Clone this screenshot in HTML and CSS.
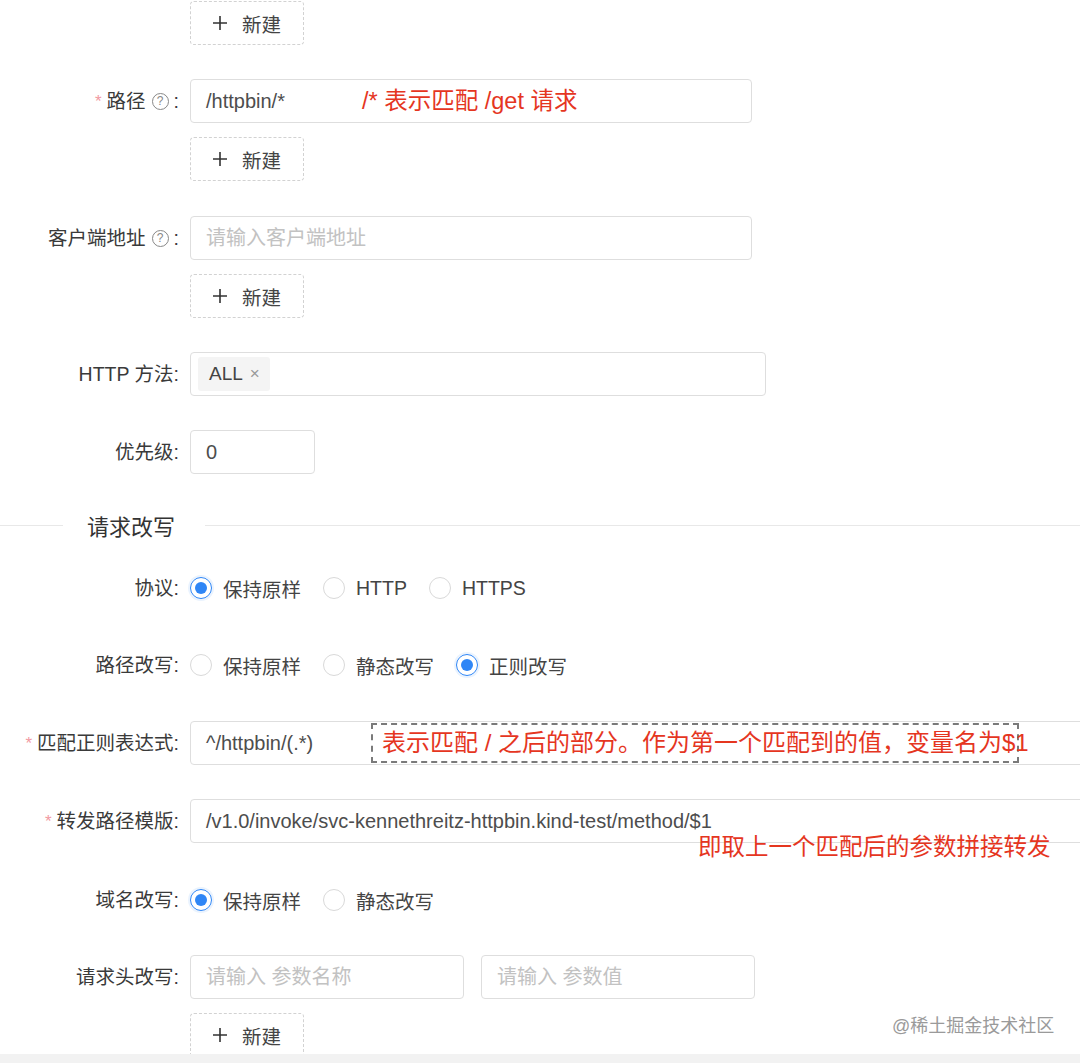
FILE: index.html
```html
<!DOCTYPE html>
<html lang="zh-CN">
<head>
  <meta charset="UTF-8">
  <title>路由规则</title>
  <link rel="stylesheet" href="styles.css">
</head>
<body>
  <div class="page">
    <div class="form">

      <div class="item">
        <div class="item-label"></div>
        <div class="control">
          <button class="btn-dashed"><svg class="plus" viewBox="0 0 14 14"><path d="M7 0v14M0 7h14"/></svg>新建</button>
        </div>
      </div>

      <div class="item item-gap">
        <label class="item-label required">路径<span class="help">?</span>:</label>
        <div class="control">
          <div class="input w-path">/httpbin/*<span class="note note-path">/* 表示匹配 /get 请求</span></div>
          <button class="btn-dashed"><svg class="plus" viewBox="0 0 14 14"><path d="M7 0v14M0 7h14"/></svg>新建</button>
        </div>
      </div>

      <div class="item">
        <label class="item-label">客户端地址<span class="help">?</span>:</label>
        <div class="control">
          <div class="input w-path placeholder">请输入客户端地址</div>
          <button class="btn-dashed"><svg class="plus" viewBox="0 0 14 14"><path d="M7 0v14M0 7h14"/></svg>新建</button>
        </div>
      </div>

      <div class="item">
        <label class="item-label">HTTP 方法:</label>
        <div class="control">
          <div class="input input-tags w-method"><span class="tag">ALL<span class="tag-close">×</span></span></div>
        </div>
      </div>

      <div class="item">
        <label class="item-label">优先级:</label>
        <div class="control">
          <div class="input w-priority">0</div>
        </div>
      </div>

      <div class="divider"><span class="divider-text">请求改写</span></div>

      <div class="item item-tight">
        <label class="item-label">协议:</label>
        <div class="radio-group">
          <span class="radio checked"><span class="radio-dot"></span><span class="radio-text">保持原样</span></span>
          <span class="radio"><span class="radio-dot"></span><span class="radio-text">HTTP</span></span>
          <span class="radio"><span class="radio-dot"></span><span class="radio-text">HTTPS</span></span>
        </div>
      </div>

      <div class="item">
        <label class="item-label">路径改写:</label>
        <div class="radio-group">
          <span class="radio"><span class="radio-dot"></span><span class="radio-text">保持原样</span></span>
          <span class="radio"><span class="radio-dot"></span><span class="radio-text">静态改写</span></span>
          <span class="radio checked"><span class="radio-dot"></span><span class="radio-text">正则改写</span></span>
        </div>
      </div>

      <div class="item">
        <label class="item-label required">匹配正则表达式:</label>
        <div class="control">
          <div class="input w-full">^/httpbin/(.*)<span class="note note-regex">表示匹配 / 之后的部分。作为第一个匹配到的值，变量名为$1</span></div>
        </div>
      </div>

      <div class="item item-gap">
        <label class="item-label required">转发路径模版:</label>
        <div class="control">
          <div class="input w-full">/v1.0/invoke/svc-kennethreitz-httpbin.kind-test/method/$1<span class="note note-forward">即取上一个匹配后的参数拼接转发</span></div>
        </div>
      </div>

      <div class="item item-tight">
        <label class="item-label">域名改写:</label>
        <div class="radio-group">
          <span class="radio checked"><span class="radio-dot"></span><span class="radio-text">保持原样</span></span>
          <span class="radio"><span class="radio-dot"></span><span class="radio-text">静态改写</span></span>
        </div>
      </div>

      <div class="item">
        <label class="item-label">请求头改写:</label>
        <div class="control">
          <div class="input-row">
            <div class="input w-half placeholder">请输入 参数名称</div>
            <div class="input w-half placeholder">请输入 参数值</div>
          </div>
          <button class="btn-dashed"><svg class="plus" viewBox="0 0 14 14"><path d="M7 0v14M0 7h14"/></svg>新建</button>
        </div>
      </div>

    </div>
    <div class="page-end"></div>
    <div class="watermark">@稀土掘金技术社区</div>
  </div>
</body>
</html>
```

FILE: styles.css
```css
body {
  margin: 0;
  font-family: "Liberation Sans", "Noto Sans CJK SC", sans-serif;
  background: #fff;
  color: #333;
}

.page {
  position: relative;
  width: 1080px;
  height: 1063px;
  overflow: hidden;
}

.form {
  height: 1054px;
  padding-top: 1px;
  box-sizing: border-box;
  overflow: hidden;
}

.page-end {
  height: 9px;
  background: #f2f2f2;
}

.item {
  display: grid;
  grid-template-columns: 190px auto;
  margin-bottom: 34px;
}

.item-gap {
  margin-bottom: 35px;
}

.item-tight {
  margin-bottom: 33px;
}

.item-label {
  height: 44px;
  line-height: 44px;
  padding-right: 11px;
  text-align: right;
  white-space: nowrap;
  font-size: 19.5px;
  color: #3a3a3a;
}

.required::before {
  content: "*";
  margin-right: 5px;
  font-size: 17px;
  color: #f29aa3;
  vertical-align: 1px;
}

.help {
  display: inline-block;
  width: 17px;
  height: 17px;
  margin: 0 5px 0 6px;
  border: 1.3px solid #888;
  border-radius: 50%;
  box-sizing: border-box;
  font-size: 12px;
  line-height: 14.4px;
  text-align: center;
  color: #888;
  vertical-align: 3px;
}

.control {
  display: flex;
  flex-direction: column;
  align-items: flex-start;
  gap: 14px;
}

.input {
  position: relative;
  height: 44px;
  padding: 0 15px;
  border: 1px solid #dedede;
  border-radius: 4px;
  box-sizing: border-box;
  background: #fff;
  font-size: 20px;
  line-height: 42px;
  color: #4d4d4d;
  white-space: nowrap;
}

.input.placeholder {
  color: #c2c2c2;
}

.w-path { width: 562px; }
.w-method { width: 576px; }
.w-priority { width: 125px; }
.w-full { width: 1000px; }
.w-half { width: 274px; }

.input-row {
  display: flex;
  gap: 17px;
}

.input-tags {
  display: flex;
  align-items: center;
  padding-left: 7px;
}

.tag {
  display: inline-flex;
  align-items: center;
  gap: 7px;
  height: 34px;
  padding: 0 10px 0 11px;
  border-radius: 3px;
  background: #f4f4f4;
  font-size: 19px;
  line-height: 34px;
  color: #444;
}

.tag-close {
  font-size: 17px;
  color: #999;
}

.btn-dashed {
  display: flex;
  align-items: center;
  justify-content: center;
  gap: 15px;
  width: 114px;
  height: 44px;
  padding: 0;
  border: 1px dashed #d2d2d2;
  border-radius: 4px;
  box-sizing: border-box;
  background: #fff;
  font-family: inherit;
  font-size: 19.5px;
  color: #444;
}

.plus {
  width: 14px;
  height: 14px;
  fill: none;
  stroke: #333;
  stroke-width: 1.6;
}

.divider {
  display: flex;
  align-items: center;
  height: 34px;
  margin-bottom: 24px;
}

.divider::before,
.divider::after {
  content: "";
  border-top: 1px solid #e8e8e8;
}

.divider::before {
  width: 63px;
}

.divider::after {
  flex: 1;
}

.divider-text {
  margin: 0 30px 0 24px;
  font-size: 22px;
  color: #333;
}

.radio-group {
  display: flex;
  align-items: center;
  height: 44px;
  font-size: 19.5px;
  color: #444;
}

.radio {
  display: flex;
  align-items: center;
  margin-right: 11px;
}

.radio-dot {
  position: relative;
  width: 22px;
  height: 22px;
  border: 1px solid #d9d9d9;
  border-radius: 50%;
  box-sizing: border-box;
}

.radio.checked .radio-dot {
  border-color: #2f86f6;
  box-shadow: 0 0 0 2px rgba(47, 134, 246, 0.1);
}

.radio.checked .radio-dot::after {
  content: "";
  position: absolute;
  top: 4px;
  left: 4px;
  width: 12px;
  height: 12px;
  border-radius: 50%;
  background: #2f86f6;
}

.radio-text {
  padding: 0 11px;
}

.note {
  position: absolute;
  white-space: nowrap;
  font-size: 23.5px;
  color: #e5361f;
}

.note-path {
  left: 171px;
  top: 0;
  line-height: 42px;
}

.note-regex {
  left: 180px;
  top: 1px;
  width: 648px;
  height: 40px;
  padding: 0 9px 0 9px;
  border: 2px dashed #7a7a7a;
  box-sizing: border-box;
  font-size: 24px;
  line-height: 36px;
}

.note-forward {
  left: 507px;
  top: 34px;
  line-height: 26px;
}

.watermark {
  position: absolute;
  left: 892px;
  top: 1014px;
  font-size: 18px;
  line-height: 24px;
  color: #9a9a9a;
}
```
